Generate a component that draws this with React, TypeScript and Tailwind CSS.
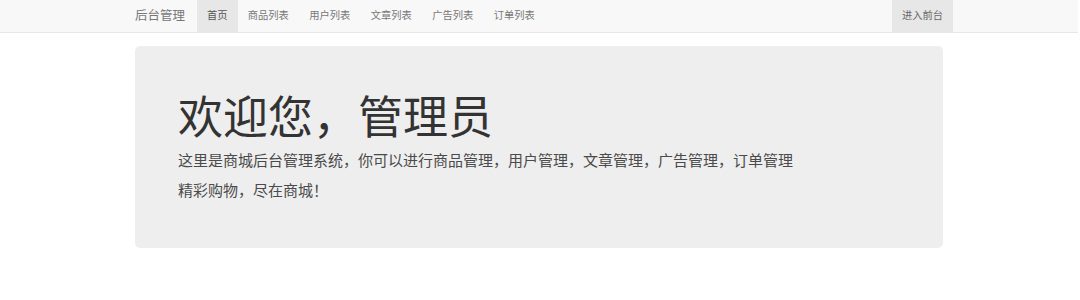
const navItems = ['首页', '商品列表', '用户列表', '文章列表', '广告列表', '订单列表'];

export default function App() {
  return (
    <div className="w-[1078px] min-h-[300px] bg-white font-['Liberation_Sans','Noto_Sans_CJK_SC',sans-serif]">
      {/* Navbar */}
      <nav className="h-[33px] bg-[#f8f8f8] border-b border-[#e7e7e7]">
        <div className="w-[808px] mx-auto h-full flex items-stretch">
          <span className="flex items-center text-[12.5px] text-[#777] mr-[12px]">后台管理</span>
          <ul className="flex items-stretch">
            {navItems.map((item, i) => (
              <li
                key={item}
                className={
                  i === 0
                    ? 'flex items-center px-[10px] text-[10.25px] text-[#555] bg-[#e7e7e7]'
                    : 'flex items-center px-[10.25px] text-[10.25px] text-[#777]'
                }
              >
                {item}
              </li>
            ))}
          </ul>
          <div className="ml-auto flex items-stretch mr-[-10px]">
            <span className="flex items-center px-[10px] text-[10.25px] text-[#666] bg-[#e7e7e7]">进入前台</span>
          </div>
        </div>
      </nav>

      {/* Jumbotron */}
      <div className="w-[808px] mx-auto mt-[13px] bg-[#eeeeee] rounded-[5px] pl-[43px] pt-[48px] pb-[42px]">
        <h1 className="text-[45px] leading-[50px] text-[#333]">欢迎您，管理员</h1>
        <p className="mt-[2px] text-[15px] leading-[30px] text-[#4a4a4a]">
          这里是商城后台管理系统，你可以进行商品管理，用户管理，文章管理，广告管理，订单管理
        </p>
        <p className="text-[15px] leading-[30px] text-[#4a4a4a]">精彩购物，尽在商城！</p>
      </div>
    </div>
  );
}
